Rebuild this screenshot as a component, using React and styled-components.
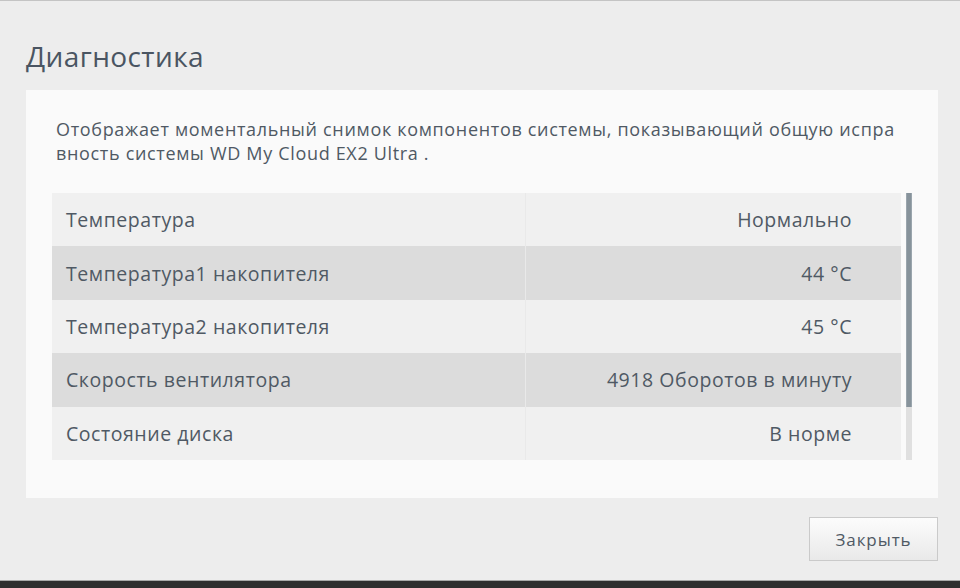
import React from "react";
import styled, { createGlobalStyle } from "styled-components";

const Global = createGlobalStyle`
  html, body { margin: 0; padding: 0; }
  body {
    background: #ededed;
    font-family: "Open Sans", "Liberation Sans", sans-serif;
    color: #4f5964;
  }
`;

const Page = styled.div`
  width: 960px;
  height: 588px;
  box-sizing: border-box;
  border-top: 1px solid #c4c4c4;
  display: flex;
  flex-direction: column;
  overflow: hidden;
`;

const Title = styled.h1`
  margin: 0;
  padding: 38px 0 17px 26px;
  font-size: 28px;
  line-height: 34px;
  font-weight: 400;
  letter-spacing: 0.4px;
  color: #4a5562;
`;

const Panel = styled.section`
  margin: 0 22px 0 26px;
  height: 408px;
  box-sizing: border-box;
  background: #fafafa;
  padding: 27px 26px 0 26px;
`;

const Description = styled.p`
  margin: 0 0 28px 4px;
  font-size: 18px;
  line-height: 24px;
  letter-spacing: 0.67px;
  color: #4f5964;
`;

const TableArea = styled.div`
  display: flex;
  gap: 5px;
  height: 267px;
`;

const Table = styled.div`
  width: 849px;
  display: flex;
  flex-direction: column;
`;

const Row = styled.div`
  height: 53.4px;
  display: grid;
  grid-template-columns: 473px 1fr;
  background: ${(p) => (p.$dark ? "#dcdcdc" : "#f0f0f0")};
`;

const Cell = styled.div`
  display: flex;
  align-items: center;
  font-size: 19.5px;
  letter-spacing: 0.55px;
  color: #4f5964;
  box-sizing: border-box;
  padding: ${(p) => (p.$right ? "0 49px 0 0" : "0 0 0 14px")};
  justify-content: ${(p) => (p.$right ? "flex-end" : "flex-start")};
  border-left: ${(p) => (p.$right ? "1px solid #e9e9e9" : "none")};
`;

const Scrollbar = styled.div`
  width: 6px;
  background: #e0e0e0;
  display: flex;
  flex-direction: column;
`;

const Thumb = styled.div`
  height: 214px;
  background: #87939b;
  box-shadow: inset 1px 0 0 #9aa5ad, inset -1px 0 0 #9aa5ad;
`;

const Footer = styled.div`
  flex: 1;
  display: flex;
  justify-content: flex-end;
  align-items: flex-start;
  padding: 19px 22px 0 0;
`;

const Button = styled.button`
  width: 129px;
  height: 44px;
  border: 1px solid #cacaca;
  background: linear-gradient(#fcfcfc, #e9e9e9);
  font-family: "Open Sans", "Liberation Sans", sans-serif;
  font-size: 17px;
  letter-spacing: 0.9px;
  color: #4f5964;
  cursor: pointer;
`;

const BottomBar = styled.div`
  height: 7px;
  border-top: 1px solid #a9a9a9;
  background: #2f2f2f;
`;

const rows = [
  ["Температура", "Нормально"],
  ["Температура1 накопителя", "44 °C"],
  ["Температура2 накопителя", "45 °C"],
  ["Скорость вентилятора", "4918 Оборотов в минуту"],
  ["Состояние диска", "В норме"],
];

export default function App() {
  return (
    <>
      <Global />
      <Page>
        <Title>Диагностика</Title>
        <Panel>
          <Description>
            Отображает моментальный снимок компонентов системы, показывающий общую испра
            <br />
            вность системы WD My Cloud EX2 Ultra .
          </Description>
          <TableArea>
            <Table>
              {rows.map(([k, v], i) => (
                <Row key={k} $dark={i % 2 === 1}>
                  <Cell>{k}</Cell>
                  <Cell $right>{v}</Cell>
                </Row>
              ))}
            </Table>
            <Scrollbar>
              <Thumb />
            </Scrollbar>
          </TableArea>
        </Panel>
        <Footer>
          <Button>Закрыть</Button>
        </Footer>
        <BottomBar />
      </Page>
    </>
  );
}
